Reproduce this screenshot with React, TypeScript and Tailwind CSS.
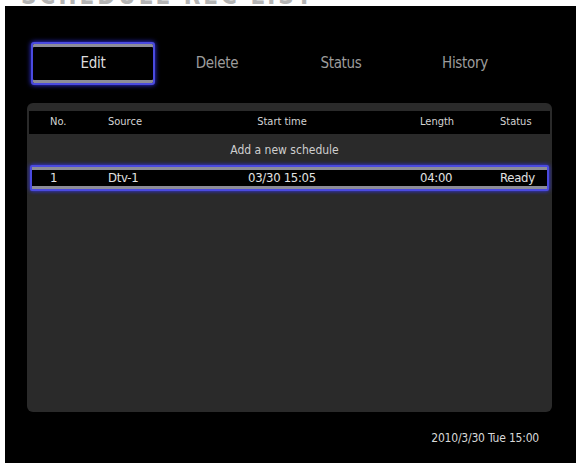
const tabs = ["Edit", "Delete", "Status", "History"];

const cols = "grid grid-cols-[58px_116px_116px_80px_80px_1fr] items-center";

export default function App() {
  return (
    <div
      className="w-[578px] h-[468px] bg-white flex flex-col pl-[5px] pr-[2px] pb-[5px] overflow-hidden"
      style={{ fontFamily: '"DejaVu Sans Condensed", "DejaVu Sans", sans-serif' }}
    >
      {/* clipped screen title, only the bottom of the glyphs shows */}
      <div className="h-[6px] shrink-0 overflow-hidden pl-[16px]">
        <div className="-mt-[16px] text-[24px] leading-[24px] tracking-[3px] font-bold text-[#b4b4b4] whitespace-nowrap">
          SCHEDULE REC LIST
        </div>
      </div>

      <div className="flex-1 bg-black flex flex-col">
        {/* tab bar */}
        <div className="mt-[36px] ml-[26px] grid grid-cols-[124px_124px_124px_124px] h-[43px]">
          {tabs.map((t, i) => (
            <div
              key={t}
              className={
                i === 0
                  ? "flex items-center justify-center rounded-[3px] border-2 border-[#4a4ae0] bg-black text-[#dcdcdc] text-[15px] tracking-[-0.3px] shadow-[0_0_5px_#3636ff,inset_0_3px_0_#8c8c98,inset_0_-3px_0_#8c8c98]"
                  : "flex items-center justify-center text-[#9c9c9c] text-[15px] tracking-[-0.3px]"
              }
            >
              {t}
            </div>
          ))}
        </div>

        {/* schedule list */}
        <div className="mt-[18px] ml-[22px] w-[525px] h-[309px] rounded-[6px] bg-[#2a2a2a] pt-[8px] px-[2px]">
          <div className={`${cols} h-[23px] bg-black pl-[21px] text-[11px] text-[#d4d4d4]`}>
            <span>No.</span>
            <span>Source</span>
            <span className="text-center">Start time</span>
            <span />
            <span>Length</span>
            <span>Status</span>
          </div>

          <div className="h-[31px] flex items-center justify-center text-[12px] text-[#cfcfcf] pr-[10px]">
            Add a new schedule
          </div>

          <div className="mx-[1px] h-[26px] rounded-[2px] border-2 border-[#4a4ae0] bg-black shadow-[0_0_4px_#3636ff,inset_0_3px_0_#8c8c98,inset_0_-3px_0_#8c8c98]">
            <div className={`${cols} h-full pl-[18px] text-[13px] tracking-[-0.3px] text-[#e2e2e2]`}>
              <span>1</span>
              <span>Dtv-1</span>
              <span className="text-center">03/30 15:05</span>
              <span />
              <span>04:00</span>
              <span>Ready</span>
            </div>
          </div>
        </div>

        {/* clock */}
        <div className="mt-[17px] w-[534px] text-right text-[12px] tracking-[-0.2px] text-[#d8d8d8]">
          2010/3/30 Tue 15:00
        </div>
      </div>
    </div>
  );
}
